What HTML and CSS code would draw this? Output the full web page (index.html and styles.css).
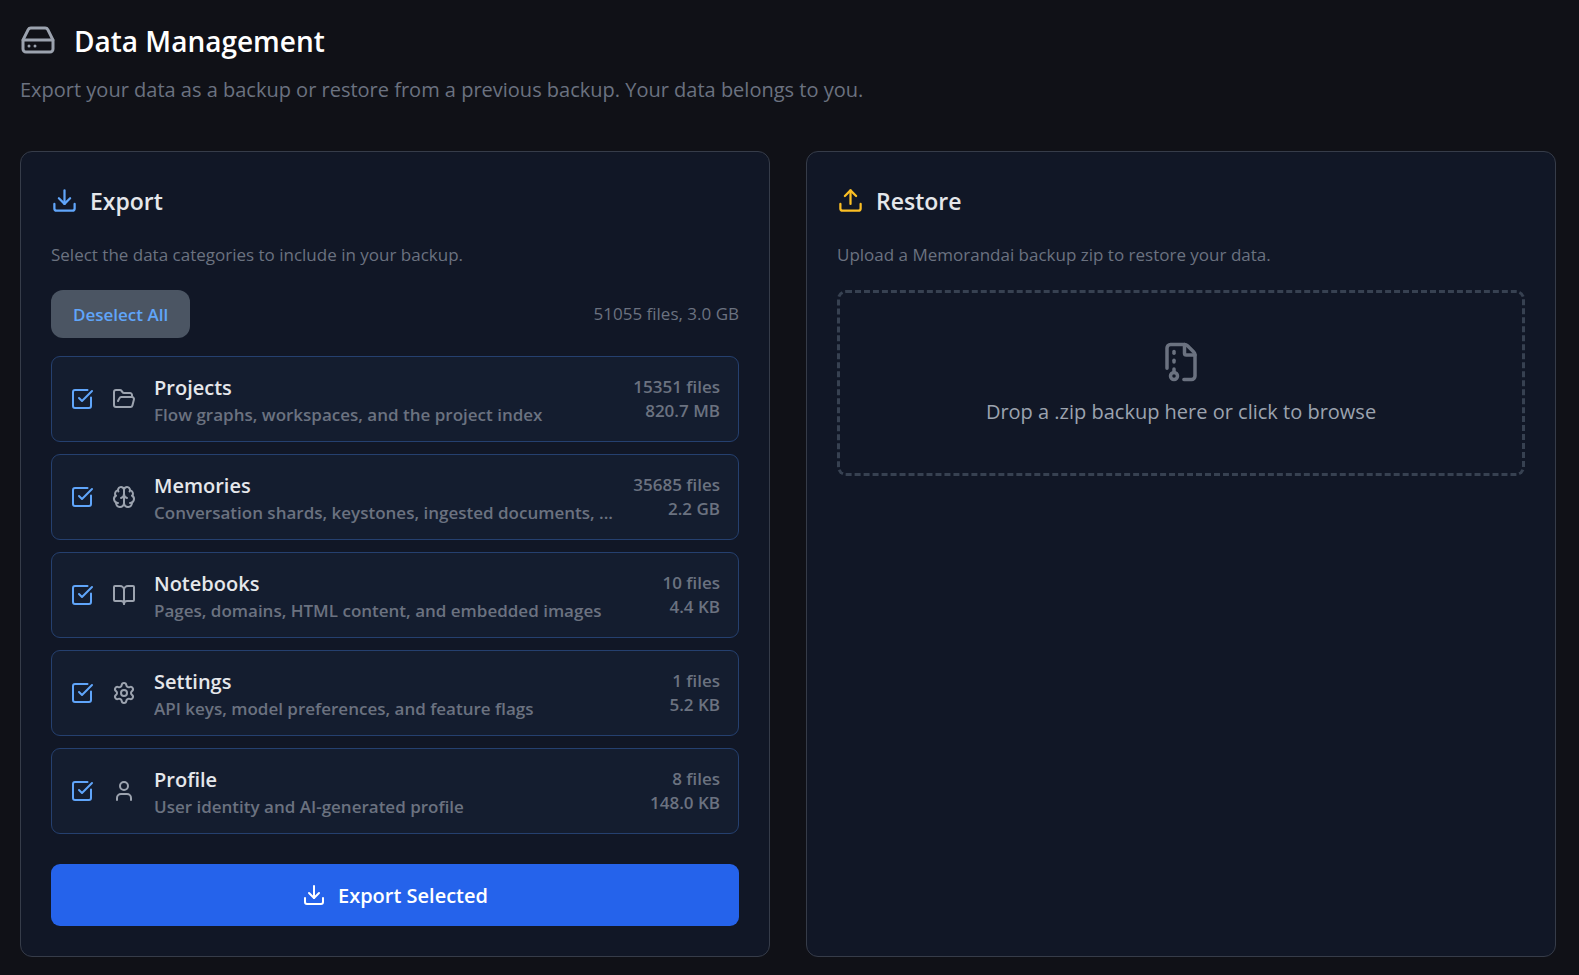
FILE: index.html
```html
<!DOCTYPE html>
<html lang="en">
<head>
  <meta charset="UTF-8">
  <meta name="viewport" content="width=device-width, initial-scale=1">
  <title>Data Management</title>
  <link rel="stylesheet" href="styles.css">
</head>
<body>
  <!-- icons used more than once -->
  <svg class="sprite" aria-hidden="true">
    <symbol id="tick" viewBox="0 0 24 24">
      <path d="M21 10.5V19a2 2 0 0 1-2 2H5a2 2 0 0 1-2-2V5a2 2 0 0 1 2-2h12.5"/>
      <path class="mark" d="m9 11 3 3L22 4"/>
    </symbol>
    <symbol id="download" viewBox="0 0 24 24">
      <path d="M12 15V3"/>
      <path d="M21 15v4a2 2 0 0 1-2 2H5a2 2 0 0 1-2-2v-4"/>
      <path d="m7 10 5 5 5-5"/>
    </symbol>
  </svg>

  <header class="page-header">
    <h1>
      <svg class="icon icon-title" viewBox="0 0 24 24">
        <path d="M10 16h.01"/>
        <path d="M2.212 11.577a2 2 0 0 0-.212.896V18a2 2 0 0 0 2 2h16a2 2 0 0 0 2-2v-5.527a2 2 0 0 0-.212-.896L18.55 5.11A2 2 0 0 0 16.76 4H7.24a2 2 0 0 0-1.79 1.11z"/>
        <path d="M21.946 12.013H2.054"/>
        <path d="M6 16h.01"/>
      </svg>
      <span>Data Management</span>
    </h1>
    <p>Export your data as a backup or restore from a previous backup. Your data belongs to you.</p>
  </header>

  <main class="panels">
    <section class="card">
      <h2>
        <svg class="icon icon-export"><use href="#download"/></svg>
        <span>Export</span>
      </h2>
      <p class="hint">Select the data categories to include in your backup.</p>

      <div class="toolbar">
        <button type="button" class="btn-select">Deselect All</button>
        <span class="total">51055 files, 3.0 GB</span>
      </div>

      <div class="categories">
        <label class="category">
          <span class="check">
            <input type="checkbox" name="projects" checked>
            <svg class="icon"><use href="#tick"/></svg>
          </span>
          <svg class="icon" viewBox="0 0 24 24">
            <path d="m6 14 1.5-2.9A2 2 0 0 1 9.24 10H20a2 2 0 0 1 1.94 2.5l-1.54 6a2 2 0 0 1-1.95 1.5H4a2 2 0 0 1-2-2V5a2 2 0 0 1 2-2h3.9a2 2 0 0 1 1.69.9l.81 1.2a2 2 0 0 0 1.67.9H18a2 2 0 0 1 2 2v2"/>
          </svg>
          <span class="info">
            <span class="name">Projects</span>
            <span class="desc">Flow graphs, workspaces, and the project index</span>
          </span>
          <span class="size"><span>15351 files</span><span>820.7 MB</span></span>
        </label>

        <label class="category">
          <span class="check">
            <input type="checkbox" name="memories" checked>
            <svg class="icon"><use href="#tick"/></svg>
          </span>
          <svg class="icon" viewBox="0 0 24 24">
            <path d="M12 18V5"/>
            <path d="M15 13a4.17 4.17 0 0 1-3-4 4.17 4.17 0 0 1-3 4"/>
            <path d="M17.598 6.5A3 3 0 1 0 12 5a3 3 0 1 0-5.598 1.5"/>
            <path d="M17.997 5.125a4 4 0 0 1 2.526 5.77"/>
            <path d="M18 18a4 4 0 0 0 2-7.464"/>
            <path d="M19.967 17.483A4 4 0 1 1 12 18a4 4 0 1 1-7.967-.517"/>
            <path d="M6 18a4 4 0 0 1-2-7.464"/>
            <path d="M6.003 5.125a4 4 0 0 0-2.526 5.77"/>
          </svg>
          <span class="info">
            <span class="name">Memories</span>
            <span class="desc">Conversation shards, keystones, ingested documents, ...</span>
          </span>
          <span class="size"><span>35685 files</span><span>2.2 GB</span></span>
        </label>

        <label class="category">
          <span class="check">
            <input type="checkbox" name="notebooks" checked>
            <svg class="icon"><use href="#tick"/></svg>
          </span>
          <svg class="icon" viewBox="0 0 24 24">
            <path d="M12 7v14"/>
            <path d="M3 18a1 1 0 0 1-1-1V4a1 1 0 0 1 1-1h5a4 4 0 0 1 4 4 4 4 0 0 1 4-4h5a1 1 0 0 1 1 1v13a1 1 0 0 1-1 1h-6a3 3 0 0 0-3 3 3 3 0 0 0-3-3z"/>
          </svg>
          <span class="info">
            <span class="name">Notebooks</span>
            <span class="desc">Pages, domains, HTML content, and embedded images</span>
          </span>
          <span class="size"><span>10 files</span><span>4.4 KB</span></span>
        </label>

        <label class="category">
          <span class="check">
            <input type="checkbox" name="settings" checked>
            <svg class="icon"><use href="#tick"/></svg>
          </span>
          <svg class="icon" viewBox="0 0 24 24">
            <path d="M9.671 4.136a2.34 2.34 0 0 1 4.659 0 2.34 2.34 0 0 0 3.319 1.915 2.34 2.34 0 0 1 2.33 4.033 2.34 2.34 0 0 0 0 3.831 2.34 2.34 0 0 1-2.33 4.033 2.34 2.34 0 0 0-3.319 1.915 2.34 2.34 0 0 1-4.659 0 2.34 2.34 0 0 0-3.32-1.915 2.34 2.34 0 0 1-2.33-4.033 2.34 2.34 0 0 0 0-3.831A2.34 2.34 0 0 1 6.35 6.051a2.34 2.34 0 0 0 3.319-1.915"/>
            <circle cx="12" cy="12" r="3"/>
          </svg>
          <span class="info">
            <span class="name">Settings</span>
            <span class="desc">API keys, model preferences, and feature flags</span>
          </span>
          <span class="size"><span>1 files</span><span>5.2 KB</span></span>
        </label>

        <label class="category">
          <span class="check">
            <input type="checkbox" name="profile" checked>
            <svg class="icon"><use href="#tick"/></svg>
          </span>
          <svg class="icon" viewBox="0 0 24 24">
            <path d="M19 21v-2a4 4 0 0 0-4-4H9a4 4 0 0 0-4 4v2"/>
            <circle cx="12" cy="7" r="4"/>
          </svg>
          <span class="info">
            <span class="name">Profile</span>
            <span class="desc">User identity and AI-generated profile</span>
          </span>
          <span class="size"><span>8 files</span><span>148.0 KB</span></span>
        </label>
      </div>

      <button type="button" class="btn-export">
        <svg class="icon"><use href="#download"/></svg>
        <span>Export Selected</span>
      </button>
    </section>

    <section class="card">
      <h2>
        <svg class="icon icon-restore" viewBox="0 0 24 24">
          <path d="M12 3v12"/>
          <path d="m17 8-5-5-5 5"/>
          <path d="M21 15v4a2 2 0 0 1-2 2H5a2 2 0 0 1-2-2v-4"/>
        </svg>
        <span>Restore</span>
      </h2>
      <p class="hint">Upload a Memorandai backup zip to restore your data.</p>

      <label class="dropzone">
        <input type="file" name="backup" accept=".zip">
        <svg class="icon icon-zip" viewBox="0 0 24 24">
          <path d="M13.659 22H18a2 2 0 0 0 2-2V8a2.4 2.4 0 0 0-.706-1.706l-3.588-3.588A2.4 2.4 0 0 0 14 2H6a2 2 0 0 0-2 2v11.5"/>
          <path d="M14 2v5a1 1 0 0 0 1 1h5"/>
          <path d="M8 12v-1"/>
          <path d="M8 18v-2"/>
          <path d="M8 7V6"/>
          <circle cx="8" cy="20" r="2"/>
        </svg>
        <span>Drop a .zip backup here or click to browse</span>
      </label>
    </section>
  </main>
</body>
</html>
```
FILE: styles.css
```css
* {
  box-sizing: border-box;
}

body {
  margin: 0;
  padding: 18px 23px 18px 20px;
  background: #101117;
  color: #e5e7eb;
  font-family: "Open Sans", "Noto Sans", sans-serif;
  font-size: 20px;
  line-height: 30px;
}

h1, h2, p {
  margin: 0;
}

.sprite {
  display: none;
}

/* icons */
.icon {
  flex: none;
  width: 24px;
  height: 24px;
  fill: none;
  stroke: currentColor;
  stroke-width: 2;
  stroke-linecap: round;
  stroke-linejoin: round;
  color: #9ca3af;
}
.icon-title {
  width: 36px;
  height: 36px;
}
.icon-export,
.icon-restore {
  width: 27px;
  height: 27px;
}
.icon-export {
  color: #60a5fa;
}
.icon-restore {
  color: #fbbf24;
}
.icon-zip {
  width: 42px;
  height: 42px;
  color: #6b7280;
}

/* header */
.page-header {
  margin-bottom: 46px;
}
.page-header p {
  color: #6b7280;
}
h1 {
  display: flex;
  align-items: center;
  gap: 18px;
  margin-bottom: 13px;
  color: #fff;
  font-size: 28px;
  font-weight: 600;
  line-height: 44px;
}
h1 span,
h2 span {
  padding-top: 2px;
}
h1 span {
  line-height: 42px;
}

/* panels */
.panels {
  display: grid;
  grid-template-columns: 1fr 1fr;
  gap: 36px;
}
.card {
  min-width: 0;
  padding: 30px;
  background: #111726;
  border: 1px solid #363c49;
  border-radius: 12px;
}
h2 {
  display: flex;
  align-items: center;
  gap: 12px;
  margin-bottom: 23px;
  font-size: 23px;
  font-weight: 600;
  line-height: 34px;
}
.hint {
  margin-bottom: 22px;
  color: #6b7280;
  font-size: 17px;
  line-height: 27px;
}

/* export */
.toolbar {
  display: flex;
  align-items: center;
  justify-content: space-between;
  margin-bottom: 18px;
}
.total {
  color: #6b7280;
  font-size: 17px;
}
button {
  border: 0;
  font-family: inherit;
  font-weight: 600;
  cursor: pointer;
}
.btn-select {
  height: 48px;
  padding: 0 22px;
  background: #4b5563;
  border-radius: 12px;
  color: #60a5fa;
  font-size: 17px;
}
.categories {
  display: grid;
  gap: 12px;
  margin-bottom: 30px;
}
.category {
  display: flex;
  align-items: center;
  gap: 18px;
  min-width: 0;
  padding: 14px 18px;
  background: #141d2f;
  border: 1px solid #25406f;
  border-radius: 9px;
  font-weight: 600;
  cursor: pointer;
}
.check {
  display: grid;
}
.check > * {
  grid-area: 1 / 1;
}
.check input {
  appearance: none;
  width: 24px;
  height: 24px;
  margin: 0;
}
.check .icon {
  color: #60a5fa;
  pointer-events: none;
}
.info {
  flex: 1;
  min-width: 0;
  padding-top: 2px;
}
.name,
.desc,
.size span {
  display: block;
}
.desc {
  overflow: hidden;
  color: #6b7280;
  font-size: 17px;
  line-height: 24px;
  text-overflow: ellipsis;
  white-space: nowrap;
}
.size {
  color: #6b7280;
  font-size: 17px;
  line-height: 24px;
  text-align: right;
}
.btn-export {
  display: flex;
  align-items: center;
  justify-content: center;
  gap: 12px;
  width: 100%;
  height: 62px;
  background: #2563eb;
  border-radius: 9px;
  color: #fff;
  font-size: 20px;
}
.btn-export .icon {
  color: #fff;
}

/* restore */
.dropzone {
  display: flex;
  flex-direction: column;
  align-items: center;
  gap: 14px;
  padding: 48px 48px 46px;
  border: 3px dashed #374151;
  border-radius: 9px;
  color: #9ca3af;
  cursor: pointer;
}
.dropzone input {
  position: absolute;
  width: 1px;
  height: 1px;
  opacity: 0;
}
```
